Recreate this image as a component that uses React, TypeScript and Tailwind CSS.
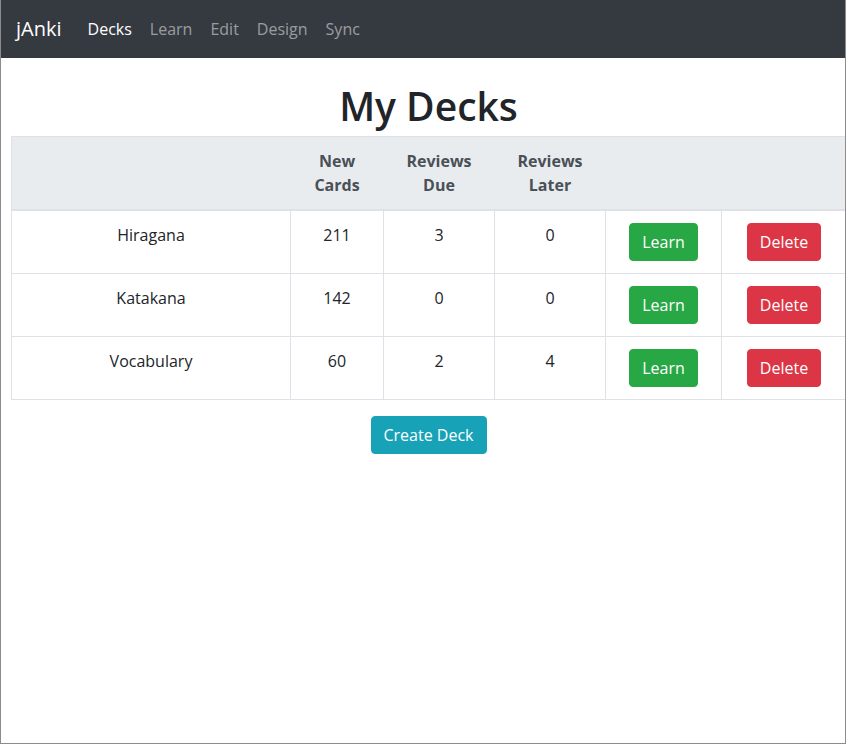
const decks = [
  { name: 'Hiragana', newCards: 211, due: 3, later: 0 },
  { name: 'Katakana', newCards: 142, due: 0, later: 0 },
  { name: 'Vocabulary', newCards: 60, due: 2, later: 4 },
];

const navLinks = ['Decks', 'Learn', 'Edit', 'Design', 'Sync'];

export default function App() {
  return (
    <div
      className="w-[846px] h-[744px] border-x border-b border-[#8c8c8c] bg-white overflow-hidden text-[#212529]"
      style={{ fontFamily: '"Open Sans", "Noto Sans", sans-serif' }}
    >
      {/* Navbar */}
      <nav className="h-[58px] bg-[#343a40] flex items-center px-[15px]">
        <span className="text-[20px] text-white mr-[17px] leading-[30px]">jAnki</span>
        <ul className="flex items-center">
          {navLinks.map((link, i) => (
            <li
              key={link}
              className={`px-[9px] text-[16px] leading-[24px] ${i === 0 ? 'text-white' : 'text-white/50'}`}
            >
              {link}
            </li>
          ))}
        </ul>
      </nav>

      <div className="ml-[10px] w-[835px]">
        <h1 className="text-center text-[39px] font-semibold leading-[48px] mt-[24px] mb-[6px]">
          My Decks
        </h1>

        {/* Deck table */}
        <table className="w-full table-fixed border-collapse border border-[#dee2e6] text-[16px] leading-[24px]">
          <colgroup>
            <col className="w-[279px]" />
            <col className="w-[93px]" />
            <col className="w-[111px]" />
            <col className="w-[111px]" />
            <col className="w-[116px]" />
            <col className="w-[125px]" />
          </colgroup>
          <thead>
            <tr className="bg-[#e9ecef] text-[#495057] font-bold">
              <th className="border-b-2 border-[#dee2e6] p-[12px]"></th>
              <th className="border-b-2 border-[#dee2e6] p-[12px]">New Cards</th>
              <th className="border-b-2 border-[#dee2e6] p-[12px]">Reviews Due</th>
              <th className="border-b-2 border-[#dee2e6] p-[12px]">Reviews Later</th>
              <th className="border-b-2 border-[#dee2e6] p-[12px]"></th>
              <th className="border-b-2 border-[#dee2e6] p-[12px]"></th>
            </tr>
          </thead>
          <tbody>
            {decks.map((deck) => (
              <tr key={deck.name} className="text-center">
                <td className="border border-[#dee2e6] px-[12px] pt-[12px] align-top">{deck.name}</td>
                <td className="border border-[#dee2e6] px-[12px] pt-[12px] align-top">{deck.newCards}</td>
                <td className="border border-[#dee2e6] px-[12px] pt-[12px] align-top">{deck.due}</td>
                <td className="border border-[#dee2e6] px-[12px] pt-[12px] align-top">{deck.later}</td>
                <td className="border border-[#dee2e6] p-[12px] align-top">
                  <button className="bg-[#28a745] border border-[#28a745] text-white rounded-[4px] px-[12px] py-[6px] leading-[24px] text-[16px]">
                    Learn
                  </button>
                </td>
                <td className="border border-[#dee2e6] p-[12px] align-top">
                  <button className="bg-[#dc3545] border border-[#dc3545] text-white rounded-[4px] px-[12px] py-[6px] leading-[24px] text-[16px]">
                    Delete
                  </button>
                </td>
              </tr>
            ))}
          </tbody>
        </table>

        <div className="flex justify-center mt-[16px]">
          <button className="bg-[#17a2b8] border border-[#17a2b8] text-white rounded-[4px] px-[12px] py-[6px] leading-[24px] text-[16px]">
            Create Deck
          </button>
        </div>
      </div>
    </div>
  );
}
